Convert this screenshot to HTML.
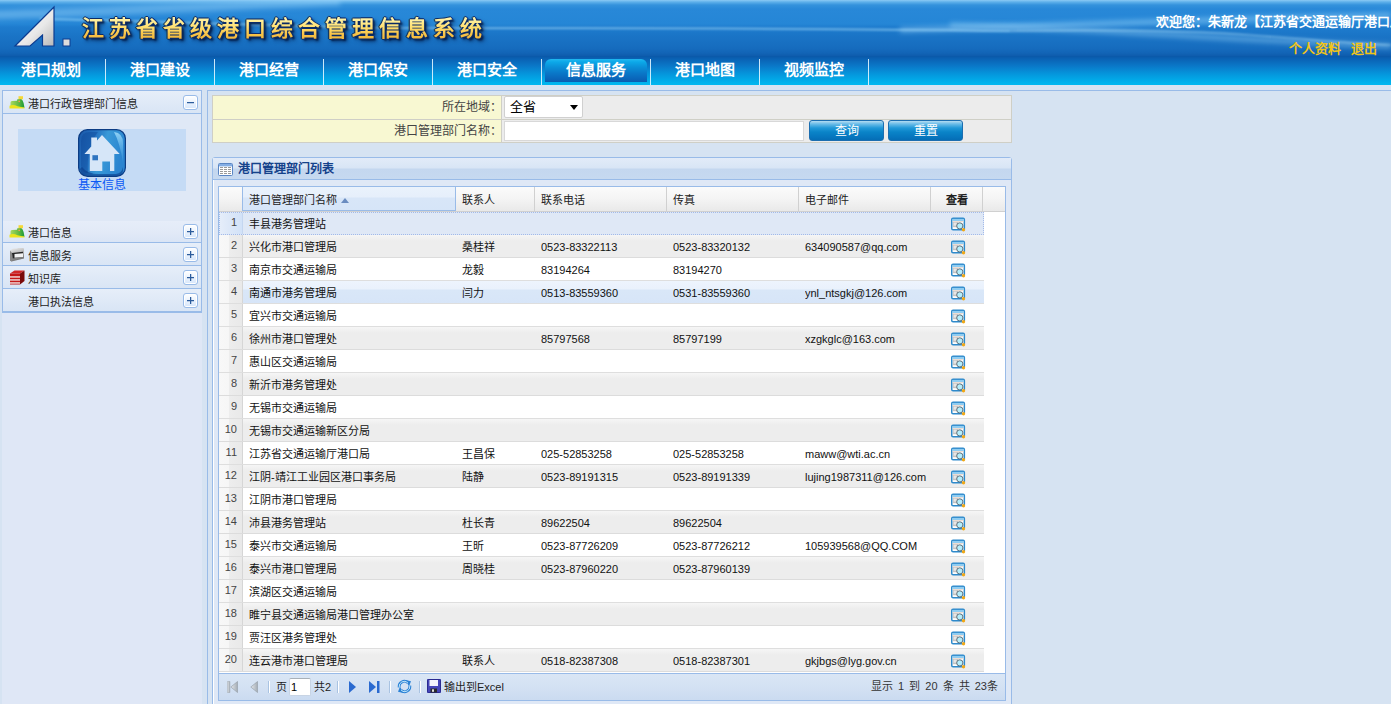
<!DOCTYPE html>
<html lang="zh-CN">
<head>
<meta charset="utf-8">
<title>江苏省省级港口综合管理信息系统</title>
<style>
*{margin:0;padding:0;box-sizing:border-box;}
html,body{width:1391px;height:704px;overflow:hidden;}
body{position:relative;background:#d6e3f2;font-family:"Liberation Sans",sans-serif;font-size:11px;color:#000;}
.abs{position:absolute;}
/* header */
#hdr{position:absolute;left:0;top:0;width:1391px;height:56px;overflow:hidden;
 background:linear-gradient(to bottom,#8ccaf4 0px,#5eb0ea 2px,#3492dc 5px,#2888d8 9px,#2586d6 24px,#1e7cce 27px,#1a74c6 36px,#166cbe 48px,#1264b6 53px,#0e5cac 56px);}
#nav{position:absolute;left:0;top:56px;width:1391px;height:29px;
 background:linear-gradient(to bottom,#0a58a8 0px,#0a62b4 3px,#0a78c8 10px,#0596dc 18px,#00b0ec 26px,#00b8f0 29px);}
.sep{position:absolute;top:3px;width:1px;height:26px;background:rgba(225,245,255,0.9);}
.nv{position:absolute;top:0;height:29px;line-height:28px;width:109px;text-align:center;color:#fff;font-size:15px;font-weight:bold;letter-spacing:0px;}
#act{position:absolute;left:545px;top:2.5px;width:102px;height:23px;border-radius:6px 6px 0 0;background:linear-gradient(to bottom,#20b8f0 0px,#0ca8e8 3px,#0a90d8 8px,#0a78c8 14px,#0a68bc 19px,#0a5cb0 23px);}
#welcome{position:absolute;left:1156px;top:11px;white-space:nowrap;color:#fff;font-family:"Liberation Serif",serif;font-size:13px;font-weight:bold;}
#links{position:absolute;left:1289px;top:38px;white-space:nowrap;color:#f2c418;font-family:"Liberation Serif",serif;font-size:13px;font-weight:bold;}
#title,#title2{position:absolute;left:82px;top:10px;white-space:nowrap;font-size:22px;font-weight:bold;letter-spacing:5px;}
#title{color:#0a2a66;text-shadow:-1px 0 0 #0c2c68,1px 0 0 #0c2c68,0 -1px 0 #0c2c68,0 1px 0 #0c2c68,2px 2px 2px rgba(0,20,60,0.9),3px 3px 4px rgba(0,20,60,0.6);}
#title2{color:transparent;background:linear-gradient(to bottom,#fffcc8 0px,#fff0a0 10px,#ffe070 17px,#f8c448 24px,#f0b030 32px);-webkit-background-clip:text;background-clip:text;}
/* left panel */
#west{position:absolute;left:2px;top:90px;width:200px;height:614px;background:#dfe7f6;}
#lp{position:absolute;left:2px;top:90px;width:200px;height:223px;border:1px solid #99bbe8;border-bottom-width:2px;background:#dfe8f6;}
.lph{position:absolute;left:0;width:198px;height:23px;border-bottom:1px solid #99bbe8;background:linear-gradient(to bottom,#e6eef9,#d9e5f5);}
.lpt{position:absolute;left:25px;top:5px;font-size:11px;color:#222;white-space:nowrap;}
.tb{position:absolute;right:3px;top:4px;width:15px;height:15px;border:1px solid #99bbe8;border-radius:3px;background:linear-gradient(to bottom,#ffffff,#d6e6fb);box-shadow:inset 0 0 0 1px #fff;}
.tb i{position:absolute;left:3px;top:6px;width:7px;height:1px;background:#2c5c9c;box-shadow:0 0.5px 0 rgba(44,92,156,0.5);}
.tb b{position:absolute;left:6px;top:3px;width:1px;height:7px;background:#2c5c9c;box-shadow:0.5px 0 0 rgba(44,92,156,0.5);}
/* main panel */
#mainb{position:absolute;left:207px;top:90px;width:1190px;height:620px;border:1px solid #99bbe8;background:#d6e3f2;}
#form{position:absolute;left:212px;top:95px;width:800px;height:48px;border:1px solid #cfcfc6;background:#ececec;}
#form .lab{position:absolute;left:0;width:289px;height:23px;background:#f8f8d2;text-align:right;padding-right:0px;line-height:22px;color:#444;font-size:12px;}
#form .hl{position:absolute;left:0;top:23px;width:798px;height:1px;background:#cfcfc6;}
#form .vl{position:absolute;left:288px;z-index:1;top:0;width:1px;height:46px;background:#cfcfc6;}
#sel{position:absolute;left:504px;top:96px;width:79px;height:22px;background:#fff;border:1px solid #d0d0d0;border-radius:2px;font-size:13px;line-height:20px;padding-left:5px;color:#000;}
#sel:after{content:"";position:absolute;right:4px;top:8px;border-left:4px solid transparent;border-right:4px solid transparent;border-top:5px solid #000;}
#txt{position:absolute;left:504px;top:121px;width:300px;height:20px;background:#fff;border:1px solid #d8d8d8;}
.btn{position:absolute;top:120px;width:75px;height:21px;border-radius:3px;border:1px solid #1c6eb0;color:#fff;font-size:12px;text-align:center;line-height:19px;padding-top:1px;background:linear-gradient(to bottom,#b4dcf2 0px,#6abce8 3px,#2098d8 7px,#0a84c8 11px,#0676be 16px,#0468b0 21px);}
/* grid panel */
#gp{position:absolute;left:212px;top:157px;width:800px;height:560px;border:1px solid #99bbe8;border-radius:3px 3px 0 0;background:#dfe8f6;box-shadow:inset 1px 0 0 #fff;}
#gph{position:absolute;left:213px;top:158px;width:798px;height:22px;border-bottom:1px solid #99bbe8;background:linear-gradient(to bottom,#e2ebf8 0px,#d8e5f5 10px,#c4d7ef 11px,#c6d9f0 21px);}
#gpt{position:absolute;left:238px;top:159px;font-size:12px;font-weight:bold;color:#15428b;white-space:nowrap;}
#grid{position:absolute;left:218px;top:186px;width:788px;height:488px;border:1px solid #99bbe8;background:#fff;}
#ghd{position:absolute;left:219px;top:187px;width:786px;height:25px;background:linear-gradient(to bottom,#fbfbfb 0px,#f4f4f4 12px,#e9e9e9 24px);border-bottom:1px solid #d0d0d0;}
.hc{position:absolute;top:0;height:24px;border-right:1px solid #d0d0d0;line-height:23px;padding-top:2px;padding-left:6px;color:#222;white-space:nowrap;font-size:11px;}
.hsort{background:linear-gradient(to bottom,#eaf2fc 0px,#e6effb 10px,#d8e6f8 11px,#d6e5f8 24px);border-left:1px solid #99bbe8 ;border-right:1px solid #99bbe8;border-bottom:1px solid #99bbe8;}
.row{position:absolute;left:219px;width:765px;height:23px;background:#fff;border-bottom:1px solid #dedede;}
.row.alt{background:linear-gradient(to bottom,#f6f6f6 0px,#ededed 6px,#ededed 23px);border-bottom-color:#dcdcdc;}
.row.sel{background:#dfe8f6;border:1px dotted #a3bae9;border-left:none;}
.row.over{background:linear-gradient(to bottom,#edf4fd 0px,#e9f1fc 8px,#d9e7f8 9px,#d7e5f8 23px);border-bottom-color:#dedede;}
.rn{position:absolute;left:0;top:0;width:24px;height:22px;text-align:right;padding-right:5px;line-height:20px;color:#444;font-size:11px;background:linear-gradient(to right,#f8f8f8 0px,#f6f6f6 10px,#ededed 10px,#e9e9e9 23px);border-right:1px solid #d6d6d6;}
.row.sel .rn{background:linear-gradient(to right,#e6eefa 0px,#dde8f8 10px,#d2e2f8 23px);border-right-color:#c4d6f0;top:0;height:21px;line-height:18px;}
.row.sel::before{content:"";position:absolute;left:0;top:-1px;height:23px;border-left:1px dotted #a3bae9;z-index:2;}
.c{position:absolute;top:1px;height:22px;line-height:22px;white-space:nowrap;overflow:hidden;color:#111;font-size:11px;}
.c1{left:30px;width:206px;}
.c2{left:243px;width:72px;}
.c3{left:322px;width:126px;}
.c4{left:454px;width:126px;}
.c5{left:586px;width:130px;}
.row.sel .c,.row.sel .vi{margin-top:-1px;}
.vi{position:absolute;left:732px;top:5px;width:15px;height:15px;}
/* pager */
#pg{position:absolute;left:218px;top:673px;width:788px;height:28px;border:1px solid #99bbe8;background:linear-gradient(to bottom,#dae6f5 0px,#d3e1f3 14px,#c9daf0 28px);}
.ps{position:absolute;top:7px;width:1px;height:12px;background:#a9c3e2;box-shadow:1px 0 0 #fff;}
#pgr{position:absolute;left:871px;top:677px;font-size:11px;color:#333;white-space:nowrap;word-spacing:2px;}
</style>
</head>
<body>
<svg width="0" height="0" style="position:absolute">
 <defs>
  <symbol id="hillico" viewBox="0 0 16 13">
   <defs><linearGradient id="hgr" x1="0" y1="0" x2="1" y2="0"><stop offset="0" stop-color="#a8d860"/><stop offset="0.6" stop-color="#60b840"/><stop offset="1" stop-color="#189838"/></linearGradient></defs>
   <path d="M1.5 11.5 L1.5 6.5 Q1.5 5 3 5 L8 4.8 L8.3 3.2 L12.2 3 Q13.8 4 14.6 7 L15.5 11.8 L1.5 11.8 Z" fill="url(#hgr)"/>
   <path d="M0.5 9.8 Q4 8.2 8.5 10.2 Q12 11 15.5 11.5 L15.5 12.5 L0.5 12.5 Z" fill="#ece41c"/>
   <rect x="9.5" y="0.2" width="4.5" height="3" fill="#f6d838"/>
   <circle cx="10.2" cy="5.3" r="0.9" fill="#f4a050"/>
  </symbol>
  <symbol id="viewico" viewBox="0 0 15 15">
   <rect x="0.75" y="1.2" width="12.6" height="11.6" rx="1.3" fill="#fdfdfd" stroke="#2e8acb" stroke-width="1.5"/>
   <rect x="1.5" y="1.9" width="11.1" height="2.2" fill="#8fcdf2"/>
   <rect x="1.5" y="4.1" width="11.1" height="0.8" fill="#ecd6c8"/>
   <rect x="2" y="5" width="5.2" height="5.2" fill="#c4c4c4"/>
   <rect x="2.6" y="5.6" width="3" height="3" fill="#e6e6e6"/>
   <circle cx="8.8" cy="8.9" r="3.1" fill="#b4eefc" stroke="#58626c" stroke-width="0.9"/>
   <circle cx="12.5" cy="12.7" r="1.7" fill="#f0a818"/>
  </symbol>
 </defs>
</svg>

<div id="hdr">
 <svg width="1391" height="56" style="position:absolute;left:0;top:0">
  <defs>
   <filter id="bl" filterUnits="userSpaceOnUse" x="-50" y="-50" width="1500" height="160"><feGaussianBlur stdDeviation="2.5"/></filter>
   <filter id="bl2" filterUnits="userSpaceOnUse" x="-50" y="-50" width="1500" height="160"><feGaussianBlur stdDeviation="0.9"/></filter>
   <linearGradient id="lg" x1="0" y1="0" x2="1" y2="1">
    <stop offset="0" stop-color="#ffffff"/><stop offset="0.6" stop-color="#e8e8e8"/><stop offset="1" stop-color="#b8b8b8"/>
   </linearGradient>
  </defs>
  <path d="M-20 15 C 80 13, 200 7, 340 1" stroke="rgba(150,210,250,0.45)" stroke-width="9" fill="none" filter="url(#bl)"/>
  <path d="M40 19 C 120 20, 220 24, 340 27 S 700 26, 1010 31" stroke="rgba(175,228,255,0.7)" stroke-width="1.5" fill="none" filter="url(#bl2)"/>
  <path d="M900 30 C 1000 28, 1100 22, 1391 15" stroke="rgba(170,225,255,0.45)" stroke-width="5" fill="none" filter="url(#bl)"/>
  <path d="M950 25 C 1100 29, 1250 41, 1391 46" stroke="rgba(170,225,255,0.4)" stroke-width="5" fill="none" filter="url(#bl)"/>
  <path d="M1010 31 C 1080 30, 1180 30, 1250 35 S 1340 43, 1391 45" stroke="rgba(200,240,255,0.55)" stroke-width="1.2" fill="none" filter="url(#bl2)"/>
  <!-- logo -->
  <polygon points="15,46 54,7 54,46 42.5,46 42.5,35 30,46" fill="url(#lg)" stroke="#0c3c90" stroke-width="1.2" stroke-linejoin="miter"/>
  <rect x="63" y="39" width="7" height="7" fill="#dcdcdc" stroke="#0c3c90" stroke-width="1"/>
 </svg>
 <div id="title">江苏省省级港口综合管理信息系统</div>
 <div id="title2">江苏省省级港口综合管理信息系统</div>
 <div id="welcome">欢迎您：朱新龙【江苏省交通运输厅港口局】</div>
 <div id="links">个人资料&nbsp;&nbsp;&nbsp;退出</div>
</div>

<div id="nav">
 <div id="act"></div>
 <div class="nv" style="left:-4px">港口规划</div>
 <div class="nv" style="left:105px">港口建设</div>
 <div class="nv" style="left:214px">港口经营</div>
 <div class="nv" style="left:323px">港口保安</div>
 <div class="nv" style="left:432px">港口安全</div>
 <div class="nv" style="left:541px">信息服务</div>
 <div class="nv" style="left:650px">港口地图</div>
 <div class="nv" style="left:759px">视频监控</div>
 <div class="sep" style="left:105px"></div>
 <div class="sep" style="left:214px"></div>
 <div class="sep" style="left:323px"></div>
 <div class="sep" style="left:432px"></div>
 <div class="sep" style="left:541px"></div>
 <div class="sep" style="left:650px"></div>
 <div class="sep" style="left:759px"></div>
 <div class="sep" style="left:868px"></div>
</div>

<!-- west -->
<div id="west"></div>
<div id="lp">
 <div class="lph" style="top:0;height:23px;">
  <svg class="abs" style="left:6px;top:5px" width="16" height="13" viewBox="0 0 16 13"><use href="#hillico"/></svg>
  <div class="lpt" style="top:4px">港口行政管理部门信息</div>
  <div class="tb" style="top:4px"><i></i></div>
 </div>
 <div class="abs" style="left:15px;top:38px;width:168px;height:62px;background:#c5dbf5;"></div>
 <svg class="abs" style="left:75px;top:38px" width="48" height="48" viewBox="0 0 48 48">
  <defs><linearGradient id="hg" x1="0" y1="0" x2="1" y2="0.3"><stop offset="0" stop-color="#1a58a8"/><stop offset="0.35" stop-color="#2470c0"/><stop offset="0.6" stop-color="#3a9ad8"/><stop offset="1" stop-color="#2a84d0"/></linearGradient>
  <linearGradient id="hg2" x1="0" y1="0" x2="0" y2="1"><stop offset="0" stop-color="#9ad8f8" stop-opacity="0.9"/><stop offset="1" stop-color="#4aaae8" stop-opacity="0.2"/></linearGradient></defs>
  <rect x="0.6" y="0.6" width="46.8" height="46.8" rx="9" fill="url(#hg)" stroke="#0c3c84" stroke-width="1.2"/>
  <path d="M3 12 Q3 3 12 3 L20 3 Q8 18 10 44 L8 44 Q3 42 3 36 Z" fill="#0a4090" opacity="0.35"/>
  <path d="M36 3 Q45 4 45 14 L45 34 Q42 14 36 3 Z" fill="url(#hg2)"/>
  <path d="M4 38 Q10 46 24 45 L38 45 Q44 44 45 38 L45 42 Q44 47 38 47 L10 47 Q3 47 2 40 Z" fill="#0a3c88" opacity="0.6"/>
  <path d="M24 6 L41.7 25 L36.3 25 L36.3 42 L32 42 L32 32.5 L24.3 32.5 L24.3 42 L11.8 42 L11.8 25 L6.4 25 L13.25 17.6 L13.25 8.6 L19 8.6 L19 11.4 Z" fill="#d6e6f8"/>
  <rect x="14.4" y="26.2" width="5.6" height="5.1" fill="#2e74c0"/>
 </svg>
 <div class="abs" style="left:75px;top:84px;font-size:12px;color:#0a58f4;white-space:nowrap;">基本信息</div>

 <div class="lph" style="top:130px;height:22px;background:linear-gradient(to bottom,#e6edf9 0,#e2eaf7 11px,#d9e4f5 22px)">
  <svg class="abs" style="left:6px;top:4px" width="16" height="13" viewBox="0 0 16 13"><use href="#hillico"/></svg>
  <div class="lpt" style="top:3px">港口信息</div>
  <div class="tb" style="top:3px"><i></i><b></b></div>
 </div>
 <div class="lph" style="top:152px;height:23px;">
  <svg class="abs" style="left:6px;top:4px" width="16" height="15" viewBox="0 0 16 15">
   <defs><linearGradient id="fg" x1="0" y1="0" x2="0.3" y2="1"><stop offset="0" stop-color="#f0f0f0"/><stop offset="0.5" stop-color="#b8b8b8"/><stop offset="1" stop-color="#707070"/></linearGradient></defs>
   <path d="M1 3.5 L4 1.5 L8 1.5 L9 1 L14.5 1 L15 2 L15 11.5 L2.5 14.5 L1 13.5 Z" fill="url(#fg)"/>
   <path d="M3 6 L14 4.8 L14 10 L3.5 11.5 Z" fill="#262626"/>
   <path d="M5.5 7 L14 6.2 L14 10 L5.5 10.8 Z" fill="#f2f2f2"/>
   <path d="M1 3.5 L3 6 L3.5 11.5 L2.5 14.5 L1 13.5Z" fill="#8a8a8a"/>
  </svg>
  <div class="lpt" style="top:4px">信息服务</div>
  <div class="tb" style="top:4px"><i></i><b></b></div>
 </div>
 <div class="lph" style="top:175px;height:23px;">
  <svg class="abs" style="left:6px;top:3px" width="16" height="16" viewBox="0 0 16 16">
   <path d="M1 4.5 L5.5 1.5 L15.5 1.5 L11 4.5 Z" fill="#d02828"/>
   <path d="M11 4.5 L15.5 1.5 L15.5 12 L11 15.5 Z" fill="#7a0a0a"/>
   <rect x="1" y="4.5" width="10" height="11" fill="#c41818"/>
   <rect x="1" y="7.3" width="10" height="1.3" fill="#f4eeee"/>
   <rect x="1" y="10.3" width="10" height="1.3" fill="#f4eeee"/>
   <rect x="1" y="13.3" width="10" height="1.3" fill="#f4eeee"/>
  </svg>
  <div class="lpt" style="top:4px">知识库</div>
  <div class="tb" style="top:4px"><i></i><b></b></div>
 </div>
 <div class="lph" style="top:198px;height:22px;border-bottom:none;">
  <div class="lpt" style="top:4px">港口执法信息</div>
  <div class="tb" style="top:4px"><i></i><b></b></div>
 </div>
</div>

<!-- main -->
<div id="mainb"></div>
<div id="form">
 <div class="lab" style="top:0">所在地域：</div>
 <div class="lab" style="top:24px;height:22px">港口管理部门名称：</div>
 <div class="hl"></div>
 <div class="vl"></div>
</div>
<div id="sel">全省</div>
<div id="txt"></div>
<div class="btn" style="left:809px">查询</div>
<div class="btn" style="left:888px">重置</div>

<div id="gp"></div>
<div id="gph"></div>
<svg class="abs" style="left:218px;top:163px" width="15" height="13" viewBox="0 0 15 13">
 <rect x="0.5" y="0.5" width="14" height="12" rx="1" fill="#fff" stroke="#5a86c4"/>
 <rect x="1" y="1" width="13" height="2.4" fill="#84aee4"/>
 <g fill="#9a9a9a"><rect x="2" y="4" width="3" height="1"/><rect x="6" y="4" width="3" height="1"/><rect x="10" y="4" width="3" height="1"/>
 <rect x="2" y="6" width="3" height="1"/><rect x="6" y="6" width="3" height="1"/><rect x="10" y="6" width="3" height="1"/>
 <rect x="2" y="8" width="3" height="1"/><rect x="6" y="8" width="3" height="1"/><rect x="10" y="8" width="3" height="1"/>
 <rect x="2" y="10" width="3" height="1"/><rect x="6" y="10" width="3" height="1"/><rect x="10" y="10" width="3" height="1"/></g>
</svg>
<div id="gpt">港口管理部门列表</div>

<div id="grid"></div>
<div id="ghd">
 <div class="hc" style="left:0;width:24px;"></div>
 <div class="hc hsort" style="left:23px;width:214px;">港口管理部门名称 <span style="display:inline-block;vertical-align:middle;margin-left:1px;border-left:4px solid transparent;border-right:4px solid transparent;border-bottom:5px solid #6a8cc0;position:relative;top:-1px"></span></div>
 <div class="hc" style="left:237px;width:79px;">联系人</div>
 <div class="hc" style="left:316px;width:132px;">联系电话</div>
 <div class="hc" style="left:448px;width:132px;">传真</div>
 <div class="hc" style="left:580px;width:132px;">电子邮件</div>
 <div class="hc" style="left:712px;width:52px;padding-left:1px;text-align:center;font-weight:bold;">查看</div>
</div>
<div class="row sel" style="top:212px"><div class="rn">1</div><div class="c c1">丰县港务管理站</div><div class="c c2"></div><div class="c c3"></div><div class="c c4"></div><div class="c c5"></div><div class="vi"><svg width="15" height="15" viewBox="0 0 15 15"><use href="#viewico"/></svg></div></div>
<div class="row alt" style="top:235px"><div class="rn">2</div><div class="c c1">兴化市港口管理局</div><div class="c c2">桑桂祥</div><div class="c c3">0523-83322113</div><div class="c c4">0523-83320132</div><div class="c c5">634090587@qq.com</div><div class="vi"><svg width="15" height="15" viewBox="0 0 15 15"><use href="#viewico"/></svg></div></div>
<div class="row" style="top:258px"><div class="rn">3</div><div class="c c1">南京市交通运输局</div><div class="c c2">龙毅</div><div class="c c3">83194264</div><div class="c c4">83194270</div><div class="c c5"></div><div class="vi"><svg width="15" height="15" viewBox="0 0 15 15"><use href="#viewico"/></svg></div></div>
<div class="row over" style="top:281px"><div class="rn">4</div><div class="c c1">南通市港务管理局</div><div class="c c2">闫力</div><div class="c c3">0513-83559360</div><div class="c c4">0531-83559360</div><div class="c c5">ynl_ntsgkj@126.com</div><div class="vi"><svg width="15" height="15" viewBox="0 0 15 15"><use href="#viewico"/></svg></div></div>
<div class="row" style="top:304px"><div class="rn">5</div><div class="c c1">宜兴市交通运输局</div><div class="c c2"></div><div class="c c3"></div><div class="c c4"></div><div class="c c5"></div><div class="vi"><svg width="15" height="15" viewBox="0 0 15 15"><use href="#viewico"/></svg></div></div>
<div class="row alt" style="top:327px"><div class="rn">6</div><div class="c c1">徐州市港口管理处</div><div class="c c2"></div><div class="c c3">85797568</div><div class="c c4">85797199</div><div class="c c5">xzgkglc@163.com</div><div class="vi"><svg width="15" height="15" viewBox="0 0 15 15"><use href="#viewico"/></svg></div></div>
<div class="row" style="top:350px"><div class="rn">7</div><div class="c c1">惠山区交通运输局</div><div class="c c2"></div><div class="c c3"></div><div class="c c4"></div><div class="c c5"></div><div class="vi"><svg width="15" height="15" viewBox="0 0 15 15"><use href="#viewico"/></svg></div></div>
<div class="row alt" style="top:373px"><div class="rn">8</div><div class="c c1">新沂市港务管理处</div><div class="c c2"></div><div class="c c3"></div><div class="c c4"></div><div class="c c5"></div><div class="vi"><svg width="15" height="15" viewBox="0 0 15 15"><use href="#viewico"/></svg></div></div>
<div class="row" style="top:396px"><div class="rn">9</div><div class="c c1">无锡市交通运输局</div><div class="c c2"></div><div class="c c3"></div><div class="c c4"></div><div class="c c5"></div><div class="vi"><svg width="15" height="15" viewBox="0 0 15 15"><use href="#viewico"/></svg></div></div>
<div class="row alt" style="top:419px"><div class="rn">10</div><div class="c c1">无锡市交通运输新区分局</div><div class="c c2"></div><div class="c c3"></div><div class="c c4"></div><div class="c c5"></div><div class="vi"><svg width="15" height="15" viewBox="0 0 15 15"><use href="#viewico"/></svg></div></div>
<div class="row" style="top:442px"><div class="rn">11</div><div class="c c1">江苏省交通运输厅港口局</div><div class="c c2">王昌保</div><div class="c c3">025-52853258</div><div class="c c4">025-52853258</div><div class="c c5">maww@wti.ac.cn</div><div class="vi"><svg width="15" height="15" viewBox="0 0 15 15"><use href="#viewico"/></svg></div></div>
<div class="row alt" style="top:465px"><div class="rn">12</div><div class="c c1">江阴-靖江工业园区港口事务局</div><div class="c c2">陆静</div><div class="c c3">0523-89191315</div><div class="c c4">0523-89191339</div><div class="c c5">lujing1987311@126.com</div><div class="vi"><svg width="15" height="15" viewBox="0 0 15 15"><use href="#viewico"/></svg></div></div>
<div class="row" style="top:488px"><div class="rn">13</div><div class="c c1">江阴市港口管理局</div><div class="c c2"></div><div class="c c3"></div><div class="c c4"></div><div class="c c5"></div><div class="vi"><svg width="15" height="15" viewBox="0 0 15 15"><use href="#viewico"/></svg></div></div>
<div class="row alt" style="top:511px"><div class="rn">14</div><div class="c c1">沛县港务管理站</div><div class="c c2">杜长青</div><div class="c c3">89622504</div><div class="c c4">89622504</div><div class="c c5"></div><div class="vi"><svg width="15" height="15" viewBox="0 0 15 15"><use href="#viewico"/></svg></div></div>
<div class="row" style="top:534px"><div class="rn">15</div><div class="c c1">泰兴市交通运输局</div><div class="c c2">王昕</div><div class="c c3">0523-87726209</div><div class="c c4">0523-87726212</div><div class="c c5">105939568@QQ.COM</div><div class="vi"><svg width="15" height="15" viewBox="0 0 15 15"><use href="#viewico"/></svg></div></div>
<div class="row alt" style="top:557px"><div class="rn">16</div><div class="c c1">泰兴市港口管理局</div><div class="c c2">周晓桂</div><div class="c c3">0523-87960220</div><div class="c c4">0523-87960139</div><div class="c c5"></div><div class="vi"><svg width="15" height="15" viewBox="0 0 15 15"><use href="#viewico"/></svg></div></div>
<div class="row" style="top:580px"><div class="rn">17</div><div class="c c1">滨湖区交通运输局</div><div class="c c2"></div><div class="c c3"></div><div class="c c4"></div><div class="c c5"></div><div class="vi"><svg width="15" height="15" viewBox="0 0 15 15"><use href="#viewico"/></svg></div></div>
<div class="row alt" style="top:603px"><div class="rn">18</div><div class="c c1">睢宁县交通运输局港口管理办公室</div><div class="c c2"></div><div class="c c3"></div><div class="c c4"></div><div class="c c5"></div><div class="vi"><svg width="15" height="15" viewBox="0 0 15 15"><use href="#viewico"/></svg></div></div>
<div class="row" style="top:626px"><div class="rn">19</div><div class="c c1">贾汪区港务管理处</div><div class="c c2"></div><div class="c c3"></div><div class="c c4"></div><div class="c c5"></div><div class="vi"><svg width="15" height="15" viewBox="0 0 15 15"><use href="#viewico"/></svg></div></div>
<div class="row alt" style="top:649px"><div class="rn">20</div><div class="c c1">连云港市港口管理局</div><div class="c c2">联系人</div><div class="c c3">0518-82387308</div><div class="c c4">0518-82387301</div><div class="c c5">gkjbgs@lyg.gov.cn</div><div class="vi"><svg width="15" height="15" viewBox="0 0 15 15"><use href="#viewico"/></svg></div></div>

<div id="pg">
 <svg class="abs" style="left:8px;top:7px" width="11" height="12" viewBox="0 0 11 12"><defs><linearGradient id="pgg" x1="0" y1="0" x2="1" y2="0"><stop offset="0" stop-color="#e4e8ec"/><stop offset="1" stop-color="#a4acb4"/></linearGradient></defs><rect x="0.3" y="0.3" width="2.6" height="11.4" rx="0.5" fill="url(#pgg)" stroke="#a0a8b0" stroke-width="0.6"/><path d="M10.5 0.5 L3.8 6 L10.5 11.5 Z" fill="url(#pgg)" stroke="#98a2ac" stroke-width="0.7"/></svg>
 <svg class="abs" style="left:31px;top:7px" width="8" height="12" viewBox="0 0 8 12"><path d="M7.5 0.5 L0.8 6 L7.5 11.5 Z" fill="url(#pgg)" stroke="#98a2ac" stroke-width="0.7"/></svg>
 <div class="ps" style="left:49px"></div>
 <div class="abs" style="left:57px;top:4px;color:#222;">页</div>
 <div class="abs" style="left:70px;top:4px;width:22px;height:18px;background:#fff;border:1px solid #c8d4e4;border-top-color:#a8b0b8;border-radius:2px;padding-left:1px;line-height:16px;color:#000;">1</div>
 <div class="abs" style="left:95px;top:4px;color:#222;">共2</div>
 <div class="ps" style="left:118px"></div>
 <svg class="abs" style="left:130px;top:7px" width="8" height="12" viewBox="0 0 8 12"><path d="M0 0 L7 6 L0 12 Z" fill="#2a6ad0"/></svg>
 <svg class="abs" style="left:150px;top:7px" width="11" height="12" viewBox="0 0 11 12"><path d="M0 0 L7 6 L0 12 Z" fill="#2a6ad0"/><rect x="8" y="0" width="2.5" height="12" fill="#2a6ad0"/></svg>
 <div class="ps" style="left:170px"></div>
 <svg class="abs" style="left:178px;top:5px" width="15" height="15" viewBox="0 0 15 15">
 <path d="M2.2 8.2 A5.2 5.2 0 0 1 10.8 3.6" stroke="#2b82d6" stroke-width="2.8" fill="none"/>
 <path d="M8.6 1 L14 2.2 L12 7.4 Z" fill="#2b82d6"/>
 <path d="M12.8 6.8 A5.2 5.2 0 0 1 4.2 11.4" stroke="#2b82d6" stroke-width="2.8" fill="none"/>
 <path d="M6.4 14 L1 12.8 L3 7.6 Z" fill="#2b82d6"/>
 <path d="M2.2 8.2 A5.2 5.2 0 0 1 10.8 3.6" stroke="#bfe6fb" stroke-width="1" fill="none"/>
 <path d="M12.8 6.8 A5.2 5.2 0 0 1 4.2 11.4" stroke="#bfe6fb" stroke-width="1" fill="none"/>
</svg>
 <div class="ps" style="left:200px"></div>
 <svg class="abs" style="left:208px;top:5px" width="14" height="14" viewBox="0 0 14 14">
 <rect x="0" y="0" width="14" height="14" rx="1" fill="#4646b8"/>
 <rect x="0.5" y="0.5" width="13" height="13" rx="1" fill="none" stroke="#2a2a90" stroke-width="1"/>
 <rect x="2.5" y="1" width="8.5" height="6" fill="#f4f4fc"/>
 <rect x="3.5" y="9.5" width="6.5" height="4" fill="#2a2a2a"/>
 <rect x="5" y="10.3" width="2" height="2.5" fill="#e0e0e0"/>
</svg>
 <div class="abs" style="left:225px;top:4px;color:#222;white-space:nowrap;">输出到Excel</div>
</div>
<div id="pgr">显示 1 到 20 条 共 23条</div>

</body>
</html>
